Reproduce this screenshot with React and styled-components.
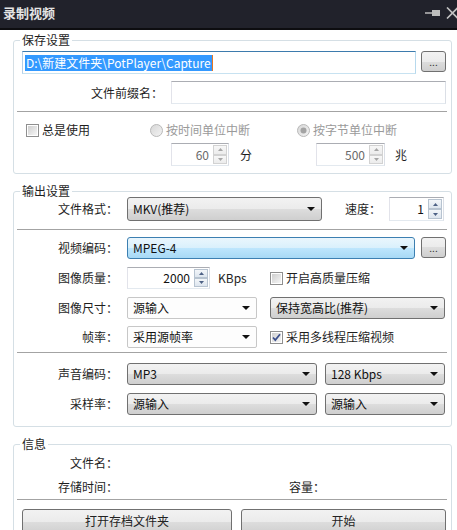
import React from 'react';
import styled, { createGlobalStyle } from 'styled-components';

const GlobalStyle = createGlobalStyle`
  html, body {
    margin: 0;
    padding: 0;
    background: #fff;
  }
  body {
    font-family: "Noto Sans CJK SC", "Microsoft YaHei", sans-serif;
    font-size: 12px;
    color: #1e1e1e;
  }
  * {
    box-sizing: border-box;
  }
`;

const Window = styled.div`
  width: 457px;
  height: 530px;
  overflow: hidden;
  background: #fff;
`;

const TitleBar = styled.div`
  height: 30px;
  background: #21222b;
  border-bottom: 2px solid #0d0d10;
  display: flex;
  align-items: center;
  justify-content: space-between;
  padding-left: 3px;
`;

const Title = styled.span`
  color: #e4e4e4;
  font-weight: 700;
  font-size: 13px;
  line-height: 16px;
  margin-top: -2px;
`;

const TitleTools = styled.div`
  display: flex;
  align-items: center;
  gap: 6px;
  margin-top: -2px;
`;

const Body = styled.div`
  padding: 0 5px 0 13px;
`;

const Group = styled.fieldset`
  margin: ${(p) => p.$mt}px 0 0 0;
  padding: 0 0 ${(p) => p.$pb || 0}px 0;
  border: 1px solid #d5dfe5;
  border-radius: 3px;
  min-inline-size: 0;
`;

const Legend = styled.legend`
  margin-left: 6px;
  padding: 0 2px;
  font-size: 12px;
  line-height: 12px;
  color: #1e1e1e;
`;

const Row = styled.div`
  display: flex;
  align-items: ${(p) => p.$align || 'center'};
  height: ${(p) => p.$h}px;
  margin-top: ${(p) => p.$mt || 0}px;
  padding-left: ${(p) => p.$pl || 0}px;
`;

const Label = styled.span`
  width: ${(p) => (p.$w ? `${p.$w}px` : 'auto')};
  margin-left: ${(p) => p.$ml || 0}px;
  margin-right: ${(p) => (p.$mr === undefined ? 9 : p.$mr)}px;
  text-align: right;
  white-space: nowrap;
  line-height: 16px;
  flex-shrink: 0;
`;

const Cell = styled.div`
  width: ${(p) => p.$w}px;
  display: flex;
  align-items: center;
  flex-shrink: 0;
`;

const Separator = styled.div`
  margin: ${(p) => p.$mt}px 4px 0 3px;
  border-top: 1px solid #a3a3a3;
`;

const TextInput = styled.div`
  width: ${(p) => p.$w}px;
  height: ${(p) => p.$h}px;
  border: 1px solid;
  border-color: ${(p) =>
    p.$focused ? '#3d7bad #b7d9ed #c7e2f1 #b5cfe7' : '#abadb3 #dbdfe6 #e3e9ef #e2e3ea'};
  background: #fff;
  display: flex;
  align-items: center;
  padding-left: 2px;
  flex-shrink: 0;
`;

const Selected = styled.span`
  background: #3399ff;
  color: #fff;
  line-height: 16px;
  padding: 0 1px;
  border-right: 1px solid #e87722;
`;

const DotsButton = styled.div`
  width: 25px;
  height: 21px;
  margin-left: ${(p) => p.$ml}px;
  border: 1px solid #707070;
  border-radius: 3px;
  background: linear-gradient(#f2f2f2 0%, #ebebeb 50%, #dddddd 50%, #cfcfcf 100%);
  display: flex;
  align-items: center;
  justify-content: center;
  font-size: 10px;
  line-height: 10px;
  color: #333;
  letter-spacing: 0;
  flex-shrink: 0;
  align-self: flex-start;
`;

const selectSkins = {
  gray: {
    border: '#707070',
    bg: 'linear-gradient(#f2f2f2 0%, #ebebeb 50%, #dddddd 50%, #cfcfcf 100%)',
  },
  blue: {
    border: '#3c7fb1',
    bg: 'linear-gradient(#eaf6fd 0%, #d9f0fc 50%, #bee6fd 50%, #a7d9f5 100%)',
  },
  white: {
    border: '#c7c7c7',
    bg: '#fdfdfd',
  },
};

const SelectBox = styled.div`
  width: ${(p) => p.$w}px;
  height: ${(p) => p.$h}px;
  margin-left: ${(p) => p.$ml || 0}px;
  border: 1px solid ${(p) => selectSkins[p.$skin].border};
  border-radius: ${(p) => (p.$skin === 'white' ? 2 : 3)}px;
  background: ${(p) => selectSkins[p.$skin].bg};
  display: flex;
  align-items: center;
  padding: 0 6px 0 5px;
  flex-shrink: 0;
`;

const SelectText = styled.span`
  flex: 1;
  line-height: 16px;
  white-space: nowrap;
  color: #111;
`;

const Select = ({ w, h = 22, skin = 'gray', ml, children }) => (
  <SelectBox $w={w} $h={h} $skin={skin} $ml={ml}>
    <SelectText>{children}</SelectText>
    <svg width="8" height="4" viewBox="0 0 8 4">
      <path d="M0 0h8L4 4z" fill="#111" />
    </svg>
  </SelectBox>
);

const SpinBox = styled.div`
  width: ${(p) => p.$w}px;
  height: ${(p) => p.$h}px;
  margin-left: ${(p) => p.$ml || 0}px;
  border: 1px solid;
  border-color: #abadb3 #dbdfe6 #e3e9ef #e2e3ea;
  background: #fff;
  display: flex;
  padding: 1px;
  flex-shrink: 0;
`;

const SpinValue = styled.span`
  flex: 1;
  align-self: center;
  text-align: right;
  padding-right: 4px;
  line-height: 16px;
  color: ${(p) => (p.$disabled ? '#6a6a6a' : '#111')};
`;

const SpinArrows = styled.div`
  width: 14px;
  display: flex;
  flex-direction: column;
`;

const SpinButton = styled.div`
  flex: 1;
  border: 1px solid ${(p) => (p.$disabled ? '#d2d2d2' : '#b7c3d0')};
  background: ${(p) =>
    p.$disabled ? 'linear-gradient(#f7f7f7, #ececec)' : 'linear-gradient(#f3f6f9, #dde5ee)'};
  display: flex;
  align-items: center;
  justify-content: center;
`;

const Spin = ({ w, h = 22, ml, value, disabled }) => {
  const c = disabled ? '#a6a6a6' : '#4d6185';
  return (
    <SpinBox $w={w} $h={h} $ml={ml}>
      <SpinValue $disabled={disabled}>{value}</SpinValue>
      <SpinArrows>
        <SpinButton $disabled={disabled}>
          <svg width="5" height="3" viewBox="0 0 5 3">
            <path d="M0 3h5L2.5 0z" fill={c} />
          </svg>
        </SpinButton>
        <SpinButton $disabled={disabled}>
          <svg width="5" height="3" viewBox="0 0 5 3">
            <path d="M0 0h5L2.5 3z" fill={c} />
          </svg>
        </SpinButton>
      </SpinArrows>
    </SpinBox>
  );
};

const CheckWrap = styled.label`
  display: flex;
  align-items: center;
  gap: 3px;
  line-height: 16px;
  white-space: nowrap;
  color: ${(p) => (p.$disabled ? '#9a9a9a' : '#1e1e1e')};
`;

const CheckSquare = styled.span`
  width: 13px;
  height: 13px;
  border: 1px solid #8f8f8f;
  background: #fff;
  padding: 1px;
  display: flex;
  flex-shrink: 0;
`;

const CheckInner = styled.span`
  flex: 1;
  background: linear-gradient(135deg, #cfcfcf, #f6f6f6);
  display: flex;
  align-items: center;
  justify-content: center;
`;

const Checkbox = ({ checked, children }) => (
  <CheckWrap>
    <CheckSquare>
      <CheckInner>
        {checked && (
          <svg width="9" height="9" viewBox="0 0 9 9">
            <path d="M1 4.5l2.3 2.6L8 1.2" fill="none" stroke="#3b4f8c" strokeWidth="1.7" />
          </svg>
        )}
      </CheckInner>
    </CheckSquare>
    {children}
  </CheckWrap>
);

const Radio = ({ checked, children }) => (
  <CheckWrap $disabled>
    <svg width="13" height="13" viewBox="0 0 13 13">
      <defs>
        <linearGradient id="rg" x1="0" y1="0" x2="1" y2="1">
          <stop offset="0" stopColor="#d6d6d6" />
          <stop offset="1" stopColor="#f4f4f4" />
        </linearGradient>
      </defs>
      <circle cx="6.5" cy="6.5" r="6" fill="url(#rg)" stroke="#b9b9b9" />
      {checked && <circle cx="6.5" cy="6.5" r="3" fill="#a3a3a3" />}
    </svg>
    {children}
  </CheckWrap>
);

const OptionGrid = styled.div`
  display: grid;
  grid-template-columns: 124px 147px 1fr;
  grid-template-rows: 14px 23px;
  row-gap: 6px;
  margin-top: 11px;
  padding-left: 12px;
`;

const Unit = styled.span`
  margin-left: ${(p) => p.$ml}px;
  line-height: 16px;
`;

const ActionButton = styled.div`
  width: ${(p) => p.$w}px;
  height: 26px;
  margin-left: ${(p) => p.$ml}px;
  border: 1px solid #707070;
  border-radius: 3px;
  background: linear-gradient(#f2f2f2 0%, #ebebeb 50%, #dddddd 50%, #cfcfcf 100%);
  display: flex;
  justify-content: center;
  padding-top: 3px;
  line-height: 16px;
  color: #222;
  flex-shrink: 0;
`;

export default function App() {
  return (
    <>
      <GlobalStyle />
      <Window>
        <TitleBar>
          <Title>录制视频</Title>
          <TitleTools>
            <svg width="15" height="8" viewBox="0 0 15 8">
              <path d="M0 4h8" stroke="#bdbdbd" strokeWidth="1.5" />
              <path d="M7 1h8v6H7z" fill="#bdbdbd" />
            </svg>
            <svg width="11" height="12" viewBox="0 0 11 12">
              <path d="M1 0.5l11 11M12 0.5l-11 11" stroke="#c2c2c2" strokeWidth="1.6" />
            </svg>
          </TitleTools>
        </TitleBar>

        <Body>
          <Group $mt={4} $pb={7}>
            <Legend>保存设置</Legend>
            <Row $h={23} $mt={5} $pl={8} $align="flex-start">
              <TextInput $w={394} $h={23} $focused>
                <Selected>D:\新建文件夹\PotPlayer\Capture</Selected>
              </TextInput>
              <DotsButton $ml={5}>...</DotsButton>
            </Row>
            <Row $h={23} $mt={7}>
              <Label $w={149} $mr={8}>文件前缀名：</Label>
              <TextInput $w={275} $h={23} />
            </Row>
            <Separator $mt={7} />
            <OptionGrid>
              <Checkbox>总是使用</Checkbox>
              <Radio>按时间单位中断</Radio>
              <Radio checked>按字节单位中断</Radio>
              <div />
              <Cell $w={147}>
                <Spin w={58} h={23} ml={21} value="60" disabled />
                <Unit $ml={11}>分</Unit>
              </Cell>
              <Cell $w={150}>
                <Spin w={69} h={23} ml={19} value="500" disabled />
                <Unit $ml={10}>兆</Unit>
              </Cell>
            </OptionGrid>
          </Group>

          <Group $mt={11} $pb={11}>
            <Legend>输出设置</Legend>
            <Row $h={24}>
              <Label $w={104}>文件格式：</Label>
              <Select w={195} h={24}>MKV(推荐)</Select>
              <Label $ml={23} $mr={8}>速度：</Label>
              <Spin w={55} h={24} value="1" />
            </Row>
            <Separator $mt={8} />
            <Row $h={22} $mt={7} $align="flex-start">
              <Label $w={104} style={{ alignSelf: 'center' }}>视频编码：</Label>
              <Select w={288} skin="blue">MPEG-4</Select>
              <DotsButton $ml={6}>...</DotsButton>
            </Row>
            <Row $h={22} $mt={8}>
              <Label $w={104}>图像质量：</Label>
              <Cell $w={143}>
                <Spin w={83} value="2000" />
                <Unit $ml={8}>KBps</Unit>
              </Cell>
              <Checkbox>开启高质量压缩</Checkbox>
            </Row>
            <Row $h={22} $mt={8}>
              <Label $w={104}>图像尺寸：</Label>
              <Select w={130} skin="white">源输入</Select>
              <Select w={175} ml={13}>保持宽高比(推荐)</Select>
            </Row>
            <Row $h={22} $mt={7}>
              <Label $w={104}>帧率：</Label>
              <Cell $w={143}>
                <Select w={130} skin="white">采用源帧率</Select>
              </Cell>
              <Checkbox checked>采用多线程压缩视频</Checkbox>
            </Row>
            <Separator $mt={4} />
            <Row $h={22} $mt={10}>
              <Label $w={104}>声音编码：</Label>
              <Select w={190}>MP3</Select>
              <Select w={120} ml={8}>128 Kbps</Select>
            </Row>
            <Row $h={22} $mt={8}>
              <Label $w={104}>采样率：</Label>
              <Select w={190}>源输入</Select>
              <Select w={120} ml={8}>源输入</Select>
            </Row>
          </Group>

          <Group $mt={11} $pb={20}>
            <Legend>信息</Legend>
            <Row $h={16} $mt={5}>
              <Label $w={104}>文件名：</Label>
            </Row>
            <Row $h={16} $mt={8}>
              <Label $w={104}>存储时间：</Label>
              <Label $ml={162}>容量：</Label>
            </Row>
            <Separator $mt={4} />
            <Row $h={26} $mt={9}>
              <ActionButton $w={210} $ml={8}>打开存档文件夹</ActionButton>
              <ActionButton $w={205} $ml={9}>开始</ActionButton>
            </Row>
          </Group>
        </Body>
      </Window>
    </>
  );
}
